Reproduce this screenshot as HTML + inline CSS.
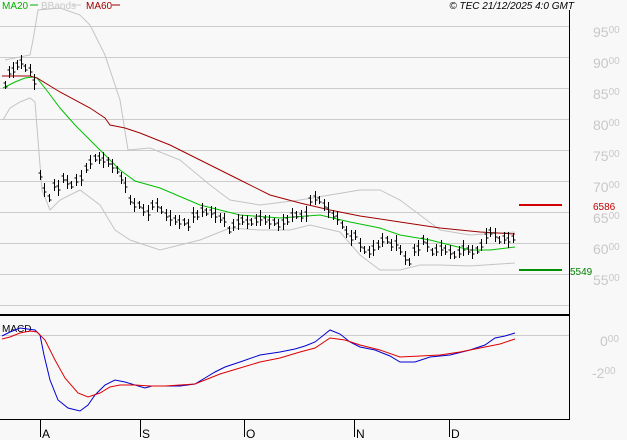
<!DOCTYPE html><html><head><style>
body{margin:0;background:#f8f8f8;width:627px;height:440px;overflow:hidden;font-family:"Liberation Sans",sans-serif}
svg{display:block}
</style></head><body>
<svg id="s" width="627" height="440" xmlns="http://www.w3.org/2000/svg" font-family="Liberation Sans, sans-serif">
<rect width="627" height="440" fill="#f8f8f8"/>
<g stroke="#cccccc" stroke-width="1">
<line x1="0" x2="569" y1="26.5" y2="26.5"/><line x1="0" x2="569" y1="57.5" y2="57.5"/><line x1="0" x2="569" y1="88.5" y2="88.5"/><line x1="0" x2="569" y1="119.5" y2="119.5"/><line x1="0" x2="569" y1="150.5" y2="150.5"/><line x1="0" x2="569" y1="181.5" y2="181.5"/><line x1="0" x2="569" y1="212.5" y2="212.5"/><line x1="0" x2="569" y1="243.5" y2="243.5"/><line x1="0" x2="569" y1="274.5" y2="274.5"/><line x1="0" x2="569" y1="305.5" y2="305.5"/>
<line x1="0" x2="569" y1="335.5" y2="335.5"/>
</g>
<g fill="#c8c8c8" font-size="14">
<text x="593" y="37">95<tspan font-size="10" dy="-4">00</tspan></text>
<text x="593" y="68">90<tspan font-size="10" dy="-4">00</tspan></text>
<text x="593" y="99">85<tspan font-size="10" dy="-4">00</tspan></text>
<text x="593" y="130">80<tspan font-size="10" dy="-4">00</tspan></text>
<text x="593" y="161">75<tspan font-size="10" dy="-4">00</tspan></text>
<text x="593" y="192">70<tspan font-size="10" dy="-4">00</tspan></text>
<text x="593" y="223">65<tspan font-size="10" dy="-4">00</tspan></text>
<text x="593" y="254">60<tspan font-size="10" dy="-4">00</tspan></text>
<text x="593" y="285">55<tspan font-size="10" dy="-4">00</tspan></text>
<text x="600" y="346">0<tspan font-size="10" dy="-4">00</tspan></text>
<text x="592" y="378">-2<tspan font-size="10" dy="-4">00</tspan></text>
</g>
<g fill="none" stroke-width="1">
<polyline stroke="#c4c4c4" points="5,60 30,55 33,40 38,10 60,8 80,15 90,25 105,55 120,100 128,150 150,148 180,160 210,185 230,200 260,205 300,200 330,195 360,190 380,190 400,200 420,215 440,230 470,235 515,232"/>
<polyline stroke="#c4c4c4" points="3,120 10,108 20,102 30,98 35,102 38,140 42,190 50,210 60,200 80,190 100,205 115,230 130,240 160,250 200,240 230,228 260,230 290,230 310,225 340,232 360,255 380,270 400,270 420,265 440,265 470,266 500,264 515,263"/>
<polyline stroke="#00c000" points="3,88 15,82 25,78 33,77 37,78 48,92 60,108 75,125 90,140 105,155 120,170 135,181 160,188 200,205 240,215 280,218 320,215 350,222 380,228 400,235 430,240 470,250 490,250 515,247"/>
<polyline stroke="#a00000" points="2,76 30,76 37,78 60,92 90,108 105,118 110,125 125,128 140,133 170,145 200,160 240,180 270,195 300,203 330,210 360,216 400,222 440,228 480,232 515,234"/>
</g>
<g id="bars" stroke="#000" stroke-width="1"></g>
<line x1="519" x2="562" y1="205" y2="205" stroke="#d00000" stroke-width="2"/>
<text x="593" y="210" fill="#c00000" font-size="10">6586</text>
<line x1="519" x2="562" y1="270" y2="270" stroke="#009000" stroke-width="2"/>
<text x="570" y="275" fill="#008000" font-size="10">5549</text>
<line x1="0" x2="569" y1="315" y2="315" stroke="#000" stroke-width="2"/>
<line x1="569.5" x2="569.5" y1="10" y2="420" stroke="#000"/>
<line x1="0" x2="570" y1="419.5" y2="419.5" stroke="#000"/>
<g stroke="#000"><line x1="40.5" x2="40.5" y1="419" y2="437"/><line x1="140.5" x2="140.5" y1="419" y2="437"/><line x1="244.5" x2="244.5" y1="419" y2="437"/><line x1="354.5" x2="354.5" y1="419" y2="437"/><line x1="449.5" x2="449.5" y1="419" y2="437"/></g>
<g font-size="12" fill="#000"><text x="42" y="438">A</text><text x="142" y="438">S</text><text x="246" y="438">O</text><text x="356" y="438">N</text><text x="451" y="438">D</text></g>
<text x="2" y="332" font-size="10" fill="#000">MACD</text>
<g fill="none" stroke-width="1">
<polyline stroke="#0000d0" points="2,336 10,332 20,328 35,330 40,335 44,355 50,380 58,400 68,408 80,411 88,405 95,395 105,385 115,380 125,382 135,385 145,388 152,386 165,386 180,386 195,384 205,378 215,372 225,367 240,362 260,355 280,352 295,349 305,346 315,342 325,334 330,330 340,334 350,342 360,347 375,350 390,356 400,362 415,362 430,357 450,355 470,350 485,345 495,338 505,336 515,333"/>
<polyline stroke="#e00000" points="2,339 10,337 20,333 30,331 37,332 45,340 55,360 65,378 78,393 88,397 100,393 110,387 120,385 135,385 150,386 165,386 180,385 195,384 205,380 220,374 240,368 260,362 280,358 300,352 315,348 330,338 345,340 360,345 380,350 400,357 420,356 440,355 460,352 480,348 500,344 515,339"/>
</g>
<g font-size="10">
<text x="2" y="9" fill="#00b000">MA20</text><line x1="30" x2="38" y1="5" y2="5" stroke="#00b000"/>
<text x="41" y="9" fill="#c8c8c8">BBands</text><line x1="73" x2="81" y1="5" y2="5" stroke="#c8c8c8"/>
<text x="86" y="9" fill="#a00000">MA60</text><line x1="112" x2="120" y1="5" y2="5" stroke="#a00000"/>
</g>
<text x="574" y="9" font-size="10" font-style="italic" text-anchor="end" fill="#000">© TEC 21/12/2025 4:0 GMT</text>
</svg>
<script>
var d=[[5,85],[9,72],[13,70],[17,65],[21,62],[25,68],[30,70],[34,82],[40,175],[44,190],[49,198],[54,185],[58,188],[63,178],[67,182],[71,185],[76,180],[81,178],[86,168],[90,162],[95,158],[99,158],[103,160],[108,162],[112,166],[117,170],[121,178],[125,185],[130,200],[134,205],[139,205],[143,210],[148,213],[152,205],[157,205],[161,210],[166,215],[170,218],[175,220],[179,222],[184,222],[188,225],[193,215],[197,215],[202,210],[206,212],[211,212],[215,215],[220,218],[224,220],[229,230],[233,225],[238,222],[242,220],[247,222],[251,222],[256,220],[260,218],[265,220],[269,222],[274,222],[278,225],[283,222],[287,220],[292,215],[296,215],[301,216],[306,214],[310,200],[315,198],[319,200],[324,205],[328,210],[333,215],[337,218],[342,225],[346,232],[351,238],[355,235],[360,245],[364,250],[369,252],[373,248],[378,245],[382,240],[387,240],[391,245],[396,243],[400,250],[405,258],[409,262],[414,250],[418,248],[423,240],[427,245],[432,252],[436,250],[441,248],[445,250],[450,252],[454,255],[459,252],[463,248],[468,250],[472,252],[477,250],[481,245],[486,236],[490,232],[495,235],[499,240],[504,238],[508,240],[513,238]];
var s='';d.forEach(function(p,i){var x=p[0]+.5,y=p[1],h=4+(i*7%5);s+='<line x1="'+x+'" x2="'+x+'" y1="'+(y-h)+'" y2="'+(y+h)+'"/><line x1="'+(x-2)+'" x2="'+x+'" y1="'+(y-2)+'" y2="'+(y-2)+'"/><line x1="'+x+'" x2="'+(x+2)+'" y1="'+(y+2)+'" y2="'+(y+2)+'"/>';});
document.getElementById('bars').innerHTML=s;
</script>
</body></html>
